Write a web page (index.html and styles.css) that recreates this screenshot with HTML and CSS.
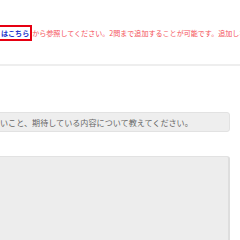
FILE: index.html
```html
<!DOCTYPE html>
<html lang="ja">
<head>
    <meta charset="UTF-8">
    <meta name="viewport" content="width=device-width, initial-scale=1.0">
    <title>質問フォーム</title>
    <link rel="stylesheet" href="styles.css">
</head>
<body>
    <div class="page">
        <p class="note"><a class="note-link" href="#">はこちら</a>から参照してください。2問まで追加することが可能です。追加しない場合は空欄のままにしてください。</p>
        <div class="divider"></div>
        <div class="field">
            <input class="field-input" type="text" placeholder="いこと、期待している内容について教えてください。">
        </div>
        <div class="field field-area">
            <textarea class="field-text"></textarea>
        </div>
    </div>
</body>
</html>
```

FILE: styles.css
```css
/* 全体 */
body {
    margin: 0;
    padding: 0;
    background: #ffffff;
    overflow: hidden;
    font-family: "Noto Sans CJK JP", "Noto Sans", sans-serif;
}

.page {
    width: 240px;
}

/* 注意書き */
.note {
    margin: 25px 0 0 -3px;
    height: 16px;
    line-height: 16px;
    font-size: 7.05px;
    color: #f4525a;
    white-space: nowrap;
}

.note-link {
    display: inline-block;
    border: 2px solid #e60012;
    padding: 0 1px 0 2px;
    line-height: 12px;
    color: #2233cc;
    font-weight: bold;
    text-decoration: none;
    vertical-align: top;
}

.divider {
    margin-top: 23px;
    height: 2px;
    background: #eeeeee;
}

/* 入力欄 */
.field {
    margin: 46px 10px 0 -10px;
}

.field-input {
    display: block;
    box-sizing: border-box;
    width: 100%;
    height: 20px;
    padding: 0 0 0 9px;
    border: 1px solid #e2e2e2;
    border-radius: 3px;
    background: #eeeeee;
    font-family: inherit;
    font-size: 8.1px;
    outline: none;
}

.field-input::placeholder {
    color: #666666;
}

.field-area {
    margin-top: 24px;
}

.field-text {
    display: block;
    box-sizing: border-box;
    width: 100%;
    height: 120px;
    border: 1px solid #e2e2e2;
    border-right: 2px solid #dedede;
    border-radius: 3px;
    background: #ededed;
    resize: none;
    outline: none;
}
```
